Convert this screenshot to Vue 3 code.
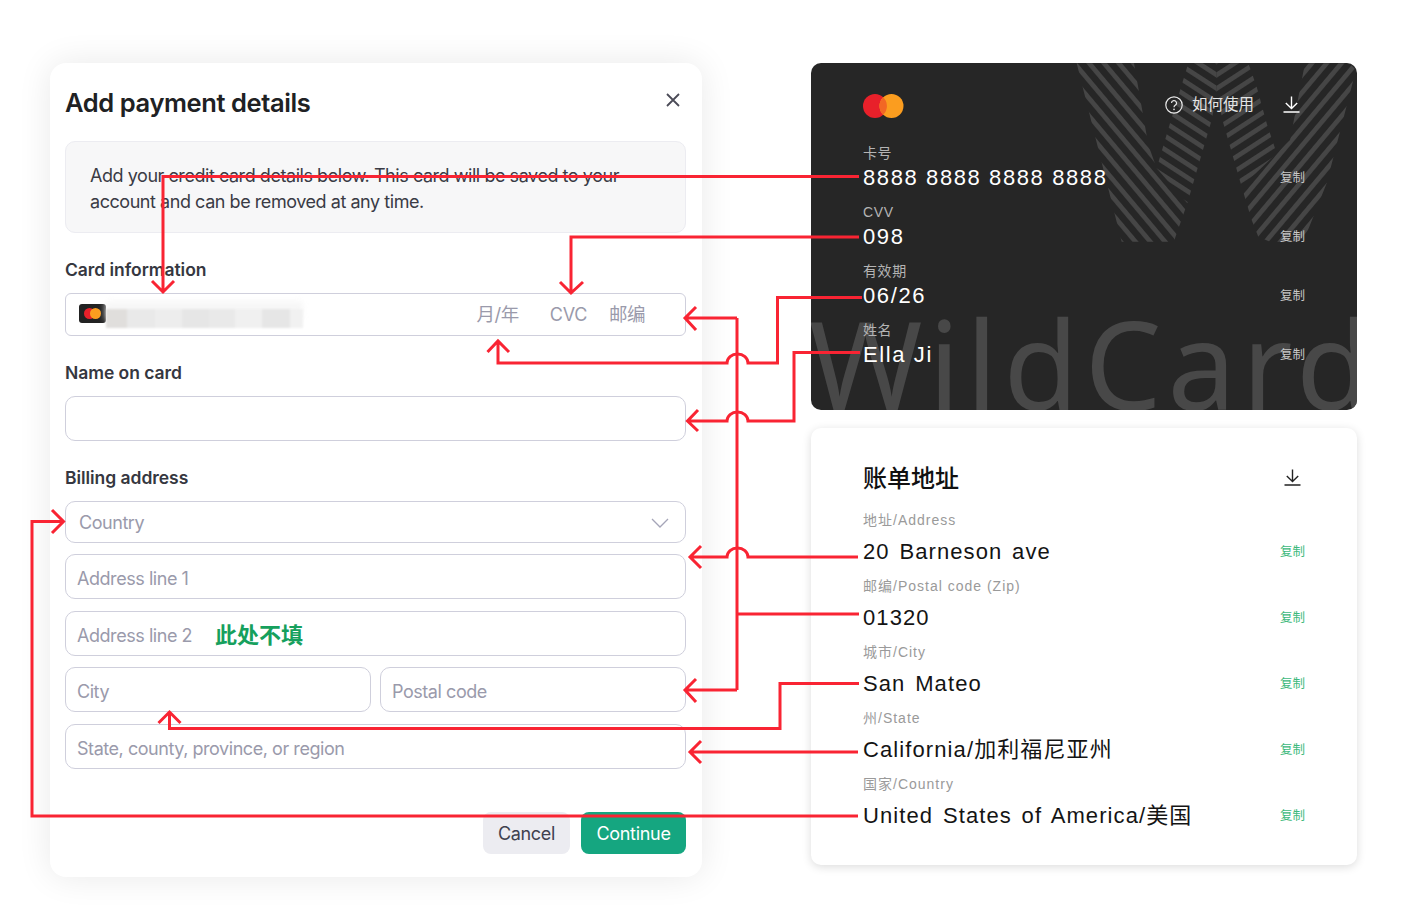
<template>
  <div class="page">
    <section class="modal">
      <div class="modal-head">
        <h1 class="modal-title">Add payment details</h1>
        <svg class="close" width="14" height="14" viewBox="0 0 14 14">
          <path d="M1 1L13 13M13 1L1 13" stroke="#4b4b57" stroke-width="1.8" fill="none" />
        </svg>
      </div>
      <div class="notice">
        <p>Add your credit card details below. This card will be saved to your</p>
        <p>account and can be removed at any time.</p>
      </div>

      <h2 class="label">Card information</h2>
      <div class="field card-field">
        <span class="chip">
          <i class="chip-red"></i>
          <i class="chip-orange"></i>
        </span>
        <span class="blur-strip">
          <i v-for="(b, i) in blurBlocks" :key="i" :style="{ width: b.w + 'px', background: b.c }"></i>
        </span>
        <span class="ph cjk ph-date">月/年</span>
        <span class="ph ph-cvc">CVC</span>
        <span class="ph cjk ph-zip">邮编</span>
      </div>

      <h2 class="label">Name on card</h2>
      <div class="field name-field"></div>

      <h2 class="label">Billing address</h2>
      <div class="stack">
        <div class="field country">
          <span class="ph">Country</span>
          <svg class="chevron" width="18" height="10" viewBox="0 0 18 10">
            <path d="M1 1L9 9L17 1" stroke="#a5a5b8" stroke-width="1.3" fill="none" />
          </svg>
        </div>
        <div class="field"><span class="ph">Address line 1</span></div>
        <div class="field nudge">
          <span class="ph">Address line 2</span>
          <span class="skip">此处不填</span>
        </div>
        <div class="city-row">
          <div class="field"><span class="ph">City</span></div>
          <div class="field"><span class="ph">Postal code</span></div>
        </div>
        <div class="field nudge"><span class="ph">State, county, province, or region</span></div>
      </div>

      <div class="actions">
        <button class="btn cancel">Cancel</button>
        <button class="btn continue">Continue</button>
      </div>
    </section>

    <div class="right">
      <section class="dark-card">
        <div class="watermark">WildCard</div>
        <svg class="stripes" width="300" height="190" viewBox="0 0 900 570">
          <defs>
            <pattern id="s1" width="10" height="34" patternUnits="userSpaceOnUse" patternTransform="rotate(50)">
              <rect width="10" height="14" fill="#464646" />
            </pattern>
            <pattern id="s2" width="10" height="34" patternUnits="userSpaceOnUse" patternTransform="translate(470 -4) rotate(33)">
              <rect width="10" height="14" fill="#464646" />
            </pattern>
            <pattern id="s3" width="10" height="34" patternUnits="userSpaceOnUse" patternTransform="translate(470 -4) rotate(-33)">
              <rect width="10" height="14" fill="#464646" />
            </pattern>
            <pattern id="s4" width="10" height="34" patternUnits="userSpaceOnUse" patternTransform="rotate(-50)">
              <rect width="10" height="14" fill="#464646" />
            </pattern>
          </defs>
          <polygon fill="url(#s1)" points="50,10 222,10 265,255 290,325 382,430 345,535 345,545 185,545" />
          <polygon fill="url(#s2)" points="385,10 470,10 470,100 455,180 382,430 290,325 330,190" />
          <polygon fill="url(#s3)" points="470,10 565,10 590,80 620,190 650,280 545,380 490,190 470,100" />
          <polygon fill="url(#s4)" points="735,10 868,10 888,30 880,60 800,370 730,545 630,545 595,530 575,480 545,380 650,280 690,240" />
        </svg>

        <div class="dark-head">
          <svg width="41" height="24" viewBox="0 0 41 24">
            <circle cx="12" cy="12" r="12" fill="#e8202a" />
            <circle cx="28.5" cy="12" r="12" fill="#fb9d1f" />
            <path d="M20.2 3.3a12 12 0 0 1 0 17.4a12 12 0 0 1 0-17.4z" fill="#f26724" />
          </svg>
          <div class="help">
            <svg width="18" height="18" viewBox="0 0 18 18">
              <circle cx="9" cy="9" r="8.2" stroke="#e8e8e8" stroke-width="1.2" fill="none" />
              <path d="M6.5 7.1a2.5 2.5 0 1 1 3.7 2.2c-.8.5-1.2.9-1.2 1.9" stroke="#e8e8e8" stroke-width="1.2" fill="none" />
              <circle cx="9" cy="13.4" r=".8" fill="#e8e8e8" />
            </svg>
            <span>如何使用</span>
          </div>
          <svg class="dl" width="17" height="17" viewBox="0 0 17 17">
            <path d="M8.5 0.5V12M2.8 7L8.5 12.5L14.2 7M0.5 16H16.5" stroke="#fff" stroke-width="1.4" fill="none" />
          </svg>
        </div>

        <div v-for="row in cardRows" :key="row.label" class="dark-row">
          <div class="row-label">{{ row.label }}</div>
          <div class="row-value">
            <span>{{ row.value }}</span>
            <span class="copy">复制</span>
          </div>
        </div>
      </section>

      <section class="addr-card">
        <div class="addr-head">
          <h2>账单地址</h2>
          <svg width="17" height="17" viewBox="0 0 17 17">
            <path d="M8.5 0.5V12M2.8 7L8.5 12.5L14.2 7M0.5 16H16.5" stroke="#222" stroke-width="1.4" fill="none" />
          </svg>
        </div>
        <div v-for="row in addrRows" :key="row.label" class="addr-row">
          <div class="row-label">{{ row.label }}</div>
          <div class="row-value">
            <span>{{ row.value }}</span>
            <span class="copy">复制</span>
          </div>
        </div>
      </section>
    </div>

    <!-- annotation arrows drawn over both panels -->
    <svg class="arrows" width="1410" height="921" viewBox="0 0 1410 921">
      <g fill="none" stroke="#f92433" stroke-width="3" stroke-linejoin="miter">
        <path d="M859 176.5H163V292M152 281L163 292L174 281" />
        <path d="M859 237H571V293M560 282L571 293L583 282" />
        <path d="M859 614H737M737 318V690M737 318H685M696 307L685 318L696 330M737 690H685M696 679L685 690L696 702" />
        <path d="M862 297.5H777.5V363H748A10.5 9 0 0 0 727 363H498V341M487.500 352L498 341L509 352" />
        <path d="M860 352.500H794V421H748A10.5 9 0 0 0 727 421H688M698 410L687.500 421L698 431" />
        <path d="M858 557H748A10.5 9 0 0 0 727 557H690M701 546L690 557L701 568" />
        <path d="M859 683.500H780V728.500H169.500V712M158.500 723L169.500 712L180.500 723" />
        <path d="M858 752H690M701 741L690 752L701 763" />
        <path d="M858 816H32V521.500H63M52 510L63.500 521.500L52 533" />
      </g>
    </svg>
  </div>
</template>

<script setup>
const blurBlocks = [
  { w: 21, c: "#e0dedc" },
  { w: 28, c: "#e9e9e9" },
  { w: 27, c: "#ededed" },
  { w: 27, c: "#e6e6e6" },
  { w: 26, c: "#e9e9e9" },
  { w: 27, c: "#f0f0f0" },
  { w: 28, c: "#e6e6e6" },
  { w: 13, c: "#f1f1f1" },
];

const cardRows = [
  { label: "卡号", value: "8888 8888 8888 8888" },
  { label: "CVV", value: "098" },
  { label: "有效期", value: "06/26" },
  { label: "姓名", value: "Ella Ji" },
];

const addrRows = [
  { label: "地址/Address", value: "20 Barneson ave" },
  { label: "邮编/Postal code (Zip)", value: "01320" },
  { label: "城市/City", value: "San Mateo" },
  { label: "州/State", value: "California/加利福尼亚州" },
  { label: "国家/Country", value: "United States of America/美国" },
];
</script>

<style>
html,
body {
  margin: 0;
  background: #fff;
}
</style>

<style scoped>
.page {
  position: relative;
  display: flex;
  gap: 109px;
  box-sizing: border-box;
  width: 1410px;
  height: 921px;
  padding: 63px 0 0 50px;
  overflow: hidden;
  font-family: Inter, "Noto Sans CJK SC", sans-serif;
}

/* left dialog */
.modal {
  display: flex;
  flex-direction: column;
  box-sizing: border-box;
  width: 652px;
  height: 814px;
  padding: 20px 16px 23px 15px;
  background: #fff;
  border-radius: 16px;
  box-shadow: 0 0 34px rgba(0, 0, 0, 0.09);
}
.modal-head {
  display: flex;
  justify-content: space-between;
  align-items: flex-start;
  height: 40px;
  margin-bottom: 18px;
}
.modal-title {
  margin: 0;
  font-size: 25.5px;
  line-height: 40px;
  font-weight: 600;
  letter-spacing: -0.4px;
  color: #202123;
}
.close {
  margin: 10px 6px 0 0;
}
.notice {
  display: flex;
  flex-direction: column;
  justify-content: center;
  box-sizing: border-box;
  height: 92px;
  padding: 4px 0 0 24px;
  background: #f7f7f8;
  border: 1px solid #ececf1;
  border-radius: 10px;
  font-size: 18px;
  line-height: 26px;
  letter-spacing: -0.45px;
  color: #3a3b45;
}
.notice p {
  margin: 0;
}
.label {
  margin: 25px 0 11px;
  font-size: 17.5px;
  line-height: 24px;
  font-weight: 600;
  letter-spacing: -0.05px;
  color: #353740;
}
.field {
  display: flex;
  align-items: center;
  box-sizing: border-box;
  height: 45px;
  padding: 3px 0 0 11px;
  background: #fff;
  border: 1.5px solid #cfcfdc;
  border-radius: 10px;
}
.ph {
  font-size: 18px;
  letter-spacing: -0.45px;
  color: #9a9aab;
}
.cjk {
  margin-bottom: 4px;
  font-size: 18.5px;
}
.card-field {
  height: 43px;
  padding: 0 0 0 12.5px;
  border-radius: 6px;
}
.chip {
  position: relative;
  flex: none;
  width: 27px;
  height: 19px;
  margin-top: -2px;
  background: #222;
  border-radius: 3px;
}
.chip i {
  position: absolute;
  top: 4px;
  width: 11px;
  height: 11px;
  border-radius: 50%;
}
.chip-red {
  left: 5px;
  background: #e8202a;
}
.chip-orange {
  left: 11px;
  background: #fb9d1f;
}
.blur-strip {
  display: flex;
  flex: none;
  width: 197px;
  height: 19px;
  margin-top: 7px;
  box-shadow: 0 -8px 6px #f7f7f7;
  filter: blur(1px);
}
.blur-strip i {
  display: block;
  height: 100%;
}
.ph-date {
  margin-left: 174px;
}
.ph-cvc {
  margin-left: 31px;
  letter-spacing: -0.3px;
}
.ph-zip {
  margin-left: 22px;
}
.stack {
  display: flex;
  flex-direction: column;
  gap: 11px;
}
.country {
  justify-content: space-between;
  height: 42px;
  padding: 1px 16px 0 13px;
}
.nudge {
  margin-top: 1px;
}
.skip {
  margin: 0 0 4px 23px;
  font-size: 22px;
  font-weight: 600;
  color: #16a05d;
}
.city-row {
  display: grid;
  grid-template-columns: 306px 306px;
  gap: 9px;
}
.actions {
  display: flex;
  justify-content: flex-end;
  gap: 11px;
  margin-top: auto;
}
.btn {
  height: 42px;
  border: none;
  border-radius: 8px;
  font-family: inherit;
  font-size: 18px;
  letter-spacing: -0.3px;
}
.cancel {
  width: 87px;
  background: #ececf1;
  color: #40414f;
}
.continue {
  width: 105px;
  background: #15a680;
  color: #fff;
}

/* right column */
.right {
  display: flex;
  flex-direction: column;
  gap: 18px;
  width: 546px;
}
.dark-card {
  position: relative;
  box-sizing: border-box;
  height: 347px;
  padding: 31px 52px 0;
  overflow: hidden;
  background: #262626;
  border-radius: 10px;
  color: #fff;
}
.watermark {
  position: absolute;
  left: -2px;
  bottom: -28px;
  font-family: "Noto Sans", sans-serif;
  font-size: 122px;
  line-height: 150px;
  letter-spacing: 6px;
  white-space: nowrap;
  color: #484848;
}
.stripes {
  position: absolute;
  left: 249px;
  top: -3px;
}
.dark-head {
  position: relative;
  display: flex;
  align-items: center;
  height: 24px;
  margin-bottom: 23px;
}
.help {
  display: flex;
  align-items: center;
  gap: 9px;
  margin: 0 0 3px auto;
  font-size: 15.5px;
  color: #e4e4e4;
}
.help span {
  margin-bottom: 3px;
}
.dl {
  margin: 0 5px 3px 29px;
}
.dark-row {
  position: relative;
  height: 59px;
}
.row-label {
  height: 24px;
  font-family: "Liberation Sans", "Noto Sans CJK SC", sans-serif;
  font-size: 14px;
  line-height: 24px;
  letter-spacing: 0.6px;
  color: #b4b4b4;
}
.row-value {
  display: flex;
  justify-content: space-between;
  align-items: center;
  height: 25px;
  font-family: "Liberation Sans", "Noto Sans CJK SC", sans-serif;
  font-size: 22px;
  line-height: 26px;
  letter-spacing: 1.6px;
}
.copy {
  margin-bottom: 2px;
  font-family: "Noto Sans CJK SC", sans-serif;
  font-size: 12.5px;
  letter-spacing: 0;
  color: #c8c8c8;
}

.addr-card {
  box-sizing: border-box;
  height: 437px;
  padding: 33px 52px 0;
  background: #fff;
  border-radius: 10px;
  box-shadow: 0 2px 10px rgba(0, 0, 0, 0.14);
}
.addr-head {
  display: flex;
  justify-content: space-between;
  align-items: center;
  height: 34px;
  margin-bottom: 13px;
  padding-right: 5px;
}
.addr-head svg {
  margin: 0 -1px 2px 0;
}
.addr-head h2 {
  margin: 0 0 4px;
  font-family: "Noto Sans CJK SC", sans-serif;
  font-size: 24px;
  font-weight: 500;
  color: #111;
}
.addr-row {
  height: 66px;
}
.addr-row .row-label {
  letter-spacing: 1px;
  color: #9a9a9a;
}
.addr-row .row-value {
  height: 40px;
  letter-spacing: 1.1px;
  word-spacing: 2.5px;
  color: #141414;
}
.addr-row .copy {
  color: #3db97c;
}

.arrows {
  position: absolute;
  left: 0;
  top: 0;
  pointer-events: none;
}
</style>
